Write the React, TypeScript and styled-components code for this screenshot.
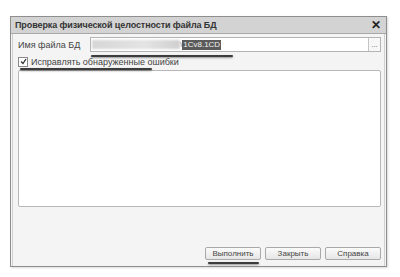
import styled, { createGlobalStyle } from "styled-components";

const GlobalStyle = createGlobalStyle`
  body {
    margin: 0;
    background: #ffffff;
    font-family: "Liberation Sans", Arial, sans-serif;
  }
`;

const Page = styled.div`
  width: 400px;
  height: 277px;
  padding: 16px 0 0 10px;
  box-sizing: border-box;
`;

const Dialog = styled.div`
  width: 377px;
  height: 251px;
  border: 1px solid #8e8e8e;
  box-sizing: border-box;
  display: flex;
  flex-direction: column;
  background: #f4f4f4;
  box-shadow: 1px 1px 2px rgba(0, 0, 0, 0.15);
`;

const TitleBar = styled.div`
  height: 16px;
  flex: none;
  display: flex;
  align-items: center;
  justify-content: space-between;
  padding: 0 5px 0 4px;
  background: #d3d3d3;
  border-bottom: 1px solid #a8a8a8;
  font-size: 9px;
  font-weight: bold;
  color: #333;
  letter-spacing: -0.1px;
`;

const Close = styled.span`
  font-size: 12px;
  font-weight: bold;
  color: #222;
  line-height: 1;
`;

const Body = styled.div`
  flex: 1;
  display: flex;
  flex-direction: column;
  padding: 3px 5px 6px 5px;
  border-left: 1px solid #d0d0d0;
  border-right: 1px solid #d0d0d0;
  margin: 0 1px;
`;

const FieldRow = styled.div`
  display: flex;
  align-items: center;
  height: 15px;
`;

const Label = styled.span`
  width: 72px;
  font-size: 9px;
  color: #444;
`;

const InputBox = styled.div`
  position: relative;
  flex: 1;
  height: 15px;
  display: flex;
  align-items: center;
  border: 1px solid #b4b4b4;
  background: #fff;
  box-sizing: border-box;
  margin-right: -2px;
`;

const Blurred = styled.span`
  width: 88px;
  height: 9px;
  margin-left: 1px;
  background: linear-gradient(90deg, #d6d6d6 0%, #e4e4e4 60%, #cfcfcf 100%);
  filter: blur(1px);
`;

const Slash = styled.span`
  font-size: 8px;
  color: #777;
`;

const Selected = styled.span`
  background: #5a5a5a;
  color: #f2f2f2;
  font-size: 8px;
  padding: 0 1px;
  line-height: 10px;
`;

const DotsButton = styled.span`
  margin-left: auto;
  width: 11px;
  height: 13px;
  border-left: 1px solid #c4c4c4;
  display: flex;
  align-items: center;
  justify-content: center;
  font-size: 7px;
  color: #555;
  background: #f7f7f7;
`;

const Mark = styled.div<{ left: number; width: number; top: number }>`
  position: absolute;
  left: ${(p) => p.left}px;
  top: ${(p) => p.top}px;
  width: ${(p) => p.width}px;
  height: 2px;
  background: #3c3c3c;
  box-shadow: 0 1px 2px rgba(0, 0, 0, 0.4);
  border-radius: 1px;
`;

const CheckRow = styled.label`
  position: relative;
  display: flex;
  align-items: center;
  gap: 3px;
  margin-top: 5px;
  height: 9px;
  font-size: 9px;
  color: #444;
`;

const CheckBox = styled.span`
  width: 8px;
  height: 8px;
  border: 1px solid #8a8a8a;
  background: #fff;
  display: flex;
  align-items: center;
  justify-content: center;
`;

const Area = styled.div`
  margin-top: 4px;
  height: 137px;
  border: 1px solid #b8b8b8;
  border-radius: 2px;
  background: #fff;
  box-sizing: border-box;
  margin-right: -2px;
`;

const Footer = styled.div`
  margin-top: auto;
  display: flex;
  justify-content: flex-end;
  gap: 4px;
  margin-right: -2px;
`;

const ButtonWrap = styled.div`
  position: relative;
`;

const Button = styled.button`
  width: 56px;
  height: 13px;
  padding: 0;
  border: 1px solid #a9a9a9;
  border-radius: 2px;
  background: linear-gradient(#fbfbfb, #e6e6e6);
  font-family: "Liberation Sans", Arial, sans-serif;
  font-size: 8px;
  color: #444;
  display: flex;
  align-items: center;
  justify-content: center;
`;

export default function App() {
  return (
    <>
      <GlobalStyle />
      <Page>
        <Dialog>
          <TitleBar>
            <span>Проверка физической целостности файла БД</span>
            <Close>✕</Close>
          </TitleBar>
          <Body>
            <FieldRow>
              <Label>Имя файла БД</Label>
              <InputBox>
                <Blurred />
                <Slash>\</Slash>
                <Selected>1Cv8.1CD</Selected>
                <DotsButton>...</DotsButton>
                <Mark left={0} top={17} width={142} />
              </InputBox>
            </FieldRow>
            <CheckRow>
              <CheckBox>
                <svg width="7" height="7" viewBox="0 0 7 7">
                  <path d="M1 3.5 L3 5.5 L6 1" stroke="#333" strokeWidth="1.3" fill="none" />
                </svg>
              </CheckBox>
              Исправлять обнаруженные ошибки
              <Mark left={2} top={11} width={132} />
            </CheckRow>
            <Area />
            <Footer>
              <ButtonWrap>
                <Button>Выполнить</Button>
                <Mark left={3} top={15} width={51} />
              </ButtonWrap>
              <ButtonWrap>
                <Button>Закрыть</Button>
              </ButtonWrap>
              <ButtonWrap>
                <Button>Справка</Button>
              </ButtonWrap>
            </Footer>
          </Body>
        </Dialog>
      </Page>
    </>
  );
}
